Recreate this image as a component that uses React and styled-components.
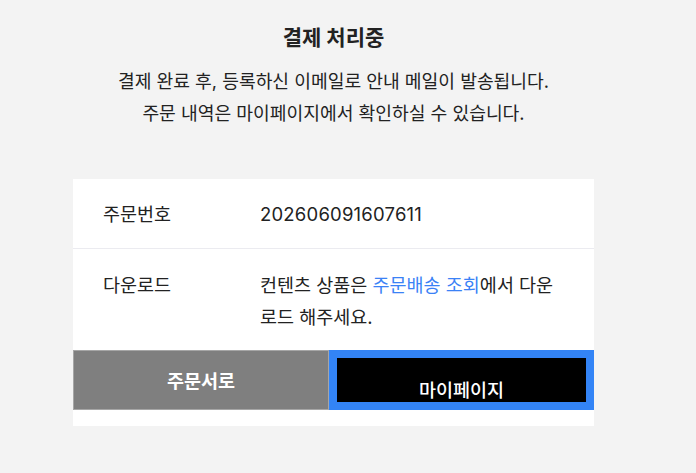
import React from 'react';
import styled, { createGlobalStyle } from 'styled-components';

const GlobalStyle = createGlobalStyle`
  body {
    margin: 0;
    background: #f3f3f3;
    font-family: Inter, "Noto Sans CJK KR", sans-serif;
    color: #222;
  }
`;

const Page = styled.div`
  width: 521px;
  margin-left: 73px;
  padding-top: 24px;
  padding-bottom: 47px;
`;

const Title = styled.h2`
  margin: 0;
  font-size: 21px;
  line-height: 28px;
  font-weight: 700;
  text-align: center;
  color: #222;
`;

const Notice = styled.p`
  margin: 14px 0 0;
  font-size: 18.2px;
  line-height: 31.5px;
  text-align: center;
  color: #222;
`;

const Card = styled.div`
  margin-top: 50px;
  background: #fff;
  padding-bottom: 18px;
`;

const Row = styled.div`
  display: grid;
  grid-template-columns: 157px 300px;
  padding: ${p => p.$pad};
  padding-left: 30px;
  font-size: 18.5px;
  line-height: ${p => p.$lh};
  border-bottom: ${p => (p.$divider ? '1px solid #ebebf0' : 'none')};
`;

const Label = styled.div`
  color: #222;
`;

const Value = styled.div`
  color: #222;
  word-break: break-all;
  letter-spacing: ${p => p.$spacing || 'normal'};
`;

const Link = styled.a`
  color: #3b82f6;
  text-decoration: none;
`;

const Actions = styled.div`
  display: grid;
  grid-template-columns: 256px 1fr;
  height: 58px;
`;

const Button = styled.button`
  margin: 0;
  font-family: inherit;
  font-size: 18.5px;
  color: #fff;
  cursor: pointer;
  box-sizing: border-box;
`;

const GrayButton = styled(Button)`
  background: #7f7f7f;
  border: 1px solid #a6a6a6;
  font-weight: 700;
  padding: 0;
`;

const DarkButton = styled(Button)`
  background: #000;
  border: 8px solid #3384f6;
  font-weight: 500;
  padding: 18px 0 0;
`;

export default function App() {
  return (
    <>
      <GlobalStyle />
      <Page>
        <Title>결제 처리중</Title>
        <Notice>
          결제 완료 후, 등록하신 이메일로 안내 메일이 발송됩니다.
          <br />
          주문 내역은 마이페이지에서 확인하실 수 있습니다.
        </Notice>
        <Card>
          <Row $divider $pad="22px 0 21px" $lh="26px">
            <Label>주문번호</Label>
            <Value $spacing="0.2px">202606091607611</Value>
          </Row>
          <Row $pad="20px 0 17px" $lh="32px">
            <Label>다운로드</Label>
            <Value>
              컨텐츠 상품은 <Link href="#">주문배송 조회</Link>에서 다운로드 해주세요.
            </Value>
          </Row>
          <Actions>
            <GrayButton>주문서로</GrayButton>
            <DarkButton>마이페이지</DarkButton>
          </Actions>
        </Card>
      </Page>
    </>
  );
}
